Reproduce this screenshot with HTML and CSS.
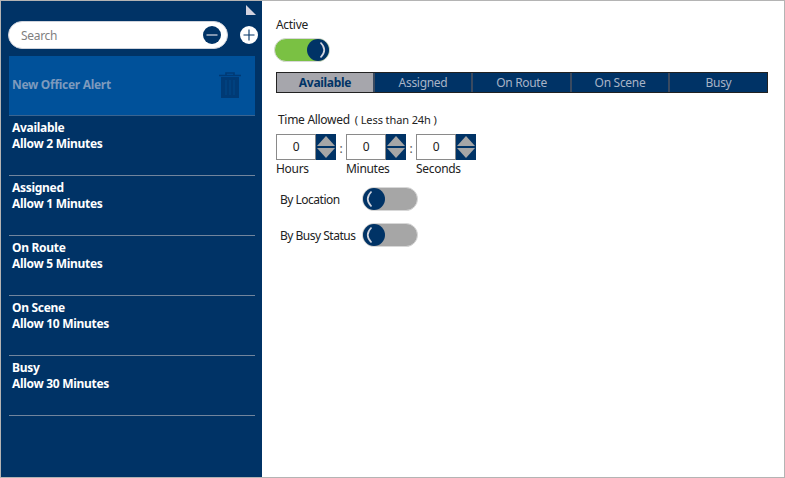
FILE: index.html
```html
<!DOCTYPE html>
<html lang="en">
<head>
<meta charset="utf-8">
<title>Officer Alert</title>
<link rel="stylesheet" href="styles.css">
</head>
<body>
<div class="window">
  <aside class="sidebar">
    <div class="corner-row"><svg class="corner" width="10" height="10" viewBox="0 0 10 10"><polygon points="0,0 10,10 0,10" fill="#d3d3e0"/></svg></div>
    <div class="search-row">
      <div class="search">
        <span class="search-text">Search</span>
        <svg class="search-btn" width="18" height="18" viewBox="0 0 18 18"><circle cx="9" cy="9" r="9" fill="#003366"/><path d="M3.5 9h11" stroke="#c8ccd8" stroke-width="1.3"/></svg>
      </div>
      <svg class="add-btn" width="18" height="18" viewBox="0 0 18 18"><circle cx="9" cy="9" r="9" fill="#fff"/><path d="M3.5 9h11M9 3.5v11" stroke="#003366" stroke-width="1.1"/></svg>
    </div>
    <div class="selected">
      <span class="selected-title">New Officer Alert</span>
      <svg class="trash" width="24" height="26" viewBox="0 0 24 26"><path d="M8 3V1h8v2M1 3.5h22" fill="none" stroke="#003a75" stroke-width="1.6"/><path d="M3 5h18v21H3z" fill="#003a75"/><path d="M8 8v15M12 8v15M16 8v15" stroke="#00488a" stroke-width="1"/></svg>
    </div>
    <ul class="list">
      <li class="item">Available<br>Allow 2 Minutes</li>
      <li class="item">Assigned<br>Allow 1 Minutes</li>
      <li class="item">On Route<br>Allow 5 Minutes</li>
      <li class="item">On Scene<br>Allow 10 Minutes</li>
      <li class="item">Busy<br>Allow 30 Minutes</li>
    </ul>
  </aside>
  <main class="main">
    <div class="active-label">Active</div>
    <div class="switch switch-on">
      <svg class="knob" width="22" height="22" viewBox="0 0 22 22"><circle cx="11" cy="11" r="11" fill="#003366"/><path d="M13.5 3.5Q21 11 13.5 18.5" fill="none" stroke="#d0d4de" stroke-width="1.7"/></svg>
    </div>
    <div class="tabs">
      <div class="tab tab-active">Available</div>
      <div class="tab">Assigned</div>
      <div class="tab">On Route</div>
      <div class="tab">On Scene</div>
      <div class="tab">Busy</div>
    </div>
    <div class="time-title">Time Allowed<span class="time-note">( Less than 24h )</span></div>
    <div class="spinners">
      <div class="spinner-col">
        <div class="spinner"><div class="value">0</div><div class="arrows"><span class="up"></span><span class="down"></span></div></div>
        <div class="unit">Hours</div>
      </div>
      <div class="colon">:</div>
      <div class="spinner-col">
        <div class="spinner"><div class="value">0</div><div class="arrows"><span class="up"></span><span class="down"></span></div></div>
        <div class="unit">Minutes</div>
      </div>
      <div class="colon">:</div>
      <div class="spinner-col">
        <div class="spinner"><div class="value">0</div><div class="arrows"><span class="up"></span><span class="down"></span></div></div>
        <div class="unit">Seconds</div>
      </div>
    </div>
    <div class="option option-first">
      <span class="option-label">By Location</span>
      <div class="switch switch-off">
        <svg class="knob" width="22" height="22" viewBox="0 0 22 22"><circle cx="11" cy="11" r="11" fill="#003366"/><path d="M8.5 3.5Q1 11 8.5 18.5" fill="none" stroke="#d0d4de" stroke-width="1.7"/></svg>
      </div>
    </div>
    <div class="option">
      <span class="option-label">By Busy Status</span>
      <div class="switch switch-off">
        <svg class="knob" width="22" height="22" viewBox="0 0 22 22"><circle cx="11" cy="11" r="11" fill="#003366"/><path d="M8.5 3.5Q1 11 8.5 18.5" fill="none" stroke="#d0d4de" stroke-width="1.7"/></svg>
      </div>
    </div>
  </main>
</div>
</body>
</html>
```

FILE: styles.css
```css
* { box-sizing: border-box; }
html, body { margin: 0; padding: 0; }
body { width: 785px; height: 478px; overflow: hidden; font-family: "Noto Sans", "Open Sans", sans-serif; background: #fff; letter-spacing: -0.3px; }
.window { display: flex; width: 785px; height: 478px; border: 1px solid #b4b4b4; background: #fff; }
.sidebar { width: 261px; flex: none; background: #003366; display: flex; flex-direction: column; padding: 4px 7px 0 8px; }
.corner-row { display: flex; justify-content: flex-end; height: 16px; }
.corner { margin-right: -1px; }
.search-row { display: flex; align-items: center; gap: 12px; margin-left: -1px; }
.search { width: 220px; flex: none; height: 28px; background: #fff; border: 1px solid #cfd3dc; border-radius: 14px; display: flex; align-items: center; justify-content: space-between; padding: 0 6px 0 12px; }
.search-text { font-size: 12px; color: #7f7f7f; }
.search-btn, .add-btn { display: block; flex: none; }
.selected { margin-top: 7px; height: 60px; background: #00519a; border-bottom: 1px solid #3a6490; display: flex; align-items: center; justify-content: space-between; padding: 0 13px 0 3px; }
.selected-title { font-size: 12px; font-weight: 700; color: #7d9abd; margin-top: -2px; }
.trash { margin-top: -2px; }
.list { list-style: none; margin: 0; padding: 0; }
.item { height: 60px; padding: 4px 0 0 3px; border-bottom: 1px solid #71859d; font-size: 12px; font-weight: 700; line-height: 16px; color: #fff; }
.main { flex: 1; padding: 15px 0 0 12px; font-size: 12px; color: #222; }
.active-label { line-height: 18px; margin-left: 2px; height: 18px; }
.switch { width: 56px; height: 24px; flex: none; border-radius: 12px; border: 1px solid #d8d8d8; display: flex; align-items: center; }
.switch-on { margin-top: 4px; background: #7ac143; justify-content: flex-end; }
.switch-off { background: #a6a6a6; justify-content: flex-start; }
.knob { display: block; flex: none; }
.tabs { display: grid; grid-template-columns: 98px 98px 99px 98px 1fr; width: 492px; height: 21px; margin: 10px 0 0 2px; border: 1px solid #222; background: #003366; }
.tab { font-size: 12px; line-height: 19px; text-align: center; color: #a8b4c6; border-right: 2px solid #3a4a60; }
.tab:last-child { border-right: 0; }
.tab-active { background: #a6a6ac; color: #003366; font-weight: 700; }
.time-title { margin: 19px 0 0 4px; line-height: 16px; }
.time-note { font-size: 11px; margin-left: 5px; letter-spacing: -0.1px; }
.spinners { display: flex; margin: 6px 0 0 2px; }
.spinner-col { width: 60px; }
.spinner { display: flex; width: 60px; height: 26px; }
.value { width: 40px; border: 1px solid #8a8a8a; text-align: center; line-height: 24px; font-size: 12px; }
.arrows { width: 20px; background: #003366; display: flex; flex-direction: column; align-items: center; justify-content: center; gap: 2px; }
.up, .down { width: 0; height: 0; border-left: 9px solid transparent; border-right: 9px solid transparent; }
.up { border-bottom: 10px solid #a6a6a6; }
.down { border-top: 10px solid #a6a6a6; }
.unit { line-height: 18px; }
.colon { width: 10px; text-align: center; line-height: 30px; color: #555; }
.option { display: flex; align-items: center; margin: 12px 0 0 6px; height: 24px; }
.option-first { margin-top: 9px; }
.option-label { width: 82px; flex: none; white-space: nowrap; letter-spacing: -0.5px; }
```
